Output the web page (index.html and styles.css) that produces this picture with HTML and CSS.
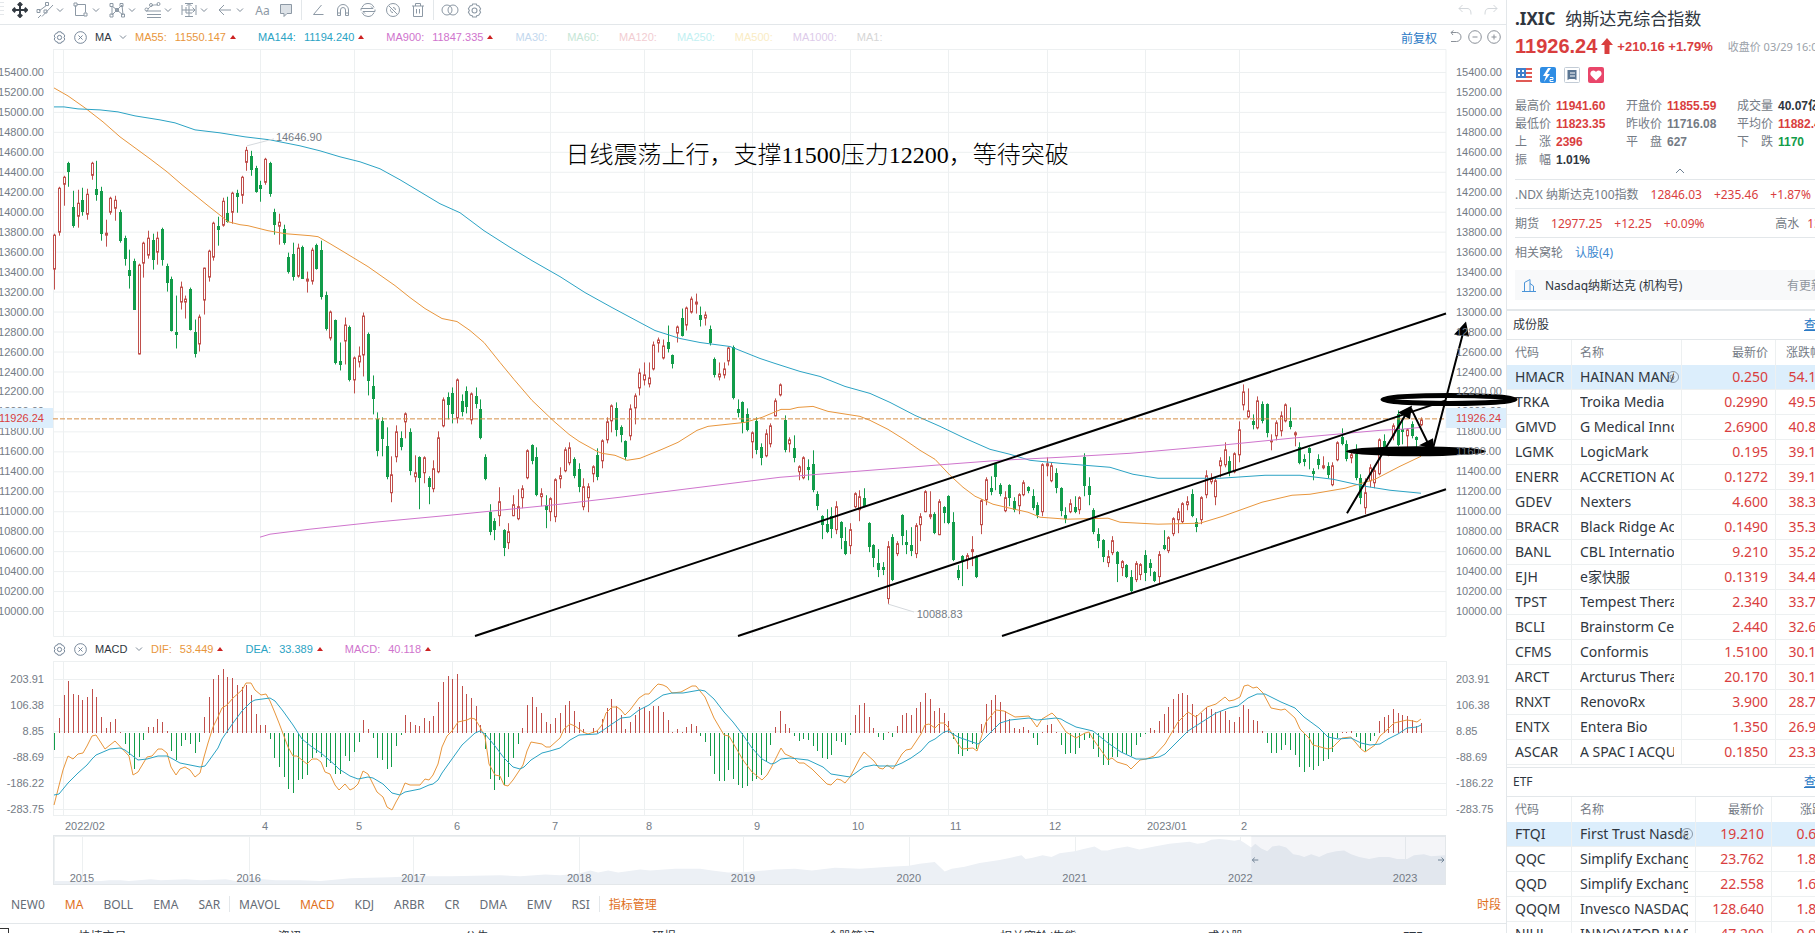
FILE: index.html
```
<!DOCTYPE html>
<html lang="zh-CN">
<head>
    <meta charset="UTF-8">
    <meta name="viewport" content="width=device-width, initial-scale=1.0">
    <title>.IXIC 纳斯达克综合指数</title>
    <link rel="stylesheet" href="styles.css">
</head>
<body>
    <svg class="defs" width="0" height="0" aria-hidden="true">
        <symbol id="caret" viewBox="0 0 8 8"><path d="M1 2.5l3 3 3-3"/></symbol>
        <symbol id="gear" viewBox="0 0 14 14"><path d="M5.3.9h3.4l.6 1.4 1.6.2 1.8 2.8-.9 1.7.9 1.7-1.8 2.8-1.6.2-.6 1.4H5.300l-.6-1.400-1.600-.2L1.300 8.700 2.200 7l-.9-1.700 1.800-2.800 1.600-.2z"/><circle cx="7" cy="7" r="2.300"/></symbol>
        <symbol id="close" viewBox="0 0 14 14"><circle cx="7" cy="7" r="6.300"/><path d="M4.800 4.800l4.400 4.400M9.200 4.800L4.800 9.200"/></symbol>
    </svg>

    <div class="app">
        <main class="chart">
            <div class="toolbar">
                <span class="handle"></span>
                <button class="move" aria-label="移动"><svg viewBox="0 0 16 16"><path d="M8 1v14M1 8h14M5.800 3.200L8 1l2.200 2.200M5.800 12.800L8 15l2.200-2.200M3.200 5.800L1 8l2.200 2.200M12.800 5.800L15 8l-2.200 2.200"/></svg></button>
                <button class="tool" aria-label="通道"><svg viewBox="0 0 18 18"><path d="M3 10l8-6M6 15.500L17 4M2 17l3-3M1 8.500h3v3H1zM9.500 1.500h3v3h-3zM8 9h3v3H8z"/></svg><svg class="caret"><use href="#caret"/></svg></button>
                <button class="tool" aria-label="矩形"><svg viewBox="0 0 18 18"><path d="M3.500 4.500v10H12M5 3.500h8.500v8M2 2h3v3H2zM12 12h3v3h-3z"/></svg><svg class="caret"><use href="#caret"/></svg></button>
                <button class="tool" aria-label="形态"><svg viewBox="0 0 18 18"><path d="M4 14V5l5 4 5-5 1 10-6-5-5 5M2 2.500h3v3H2zM12 2.500h3v3h-3zM2 13h3v3H2zM13.500 13h3v3h-3zM7.500 7.500h3v3h-3z"/></svg><svg class="caret"><use href="#caret"/></svg></button>
                <button class="tool" aria-label="黄金分割"><svg viewBox="0 0 18 18"><path d="M2 10h15M3 13.500h14M3 16.500h14M4 8c4-5 7-4 10-4"/><circle cx="2.500" cy="8.500" r="1.500"/><circle cx="7" cy="4" r="1.500"/><circle cx="14.500" cy="3" r="1.500"/></svg><svg class="caret"><use href="#caret"/></svg></button>
                <button class="tool" aria-label="测量"><svg viewBox="0 0 18 18"><path d="M2 4v10M16 4v10M2 9h13M9 2v14M5 2.500h8M5 15.500h8M12.500 6.500L15 9l-2.500 2.500M6.500 5L9 2.500 11.500 5M6 6v6h6"/></svg><svg class="caret"><use href="#caret"/></svg></button>
                <button class="tool" aria-label="箭头"><svg viewBox="0 0 18 18"><path d="M15 9H3M8 4L3 9l5 5"/></svg><svg class="caret"><use href="#caret"/></svg></button>
                <button class="text-tool">Aa</button>
                <button class="icon" aria-label="批注"><svg viewBox="0 0 16 16"><path class="soft" d="M2.500 2.500h11v9H9l-3 3v-3H2.500z"/></svg></button>
                <span class="split"></span>
                <button class="icon" aria-label="角度"><svg viewBox="0 0 16 16"><path d="M11.500 3L3.500 12.500h10"/></svg></button>
                <button class="icon" aria-label="磁吸"><svg viewBox="0 0 16 16"><path d="M2.500 13.500V8a5.500 5.500 0 0 1 11 0v5.500h-3V8a2.500 2.500 0 0 0-5 0v5.500zM2.500 11h3M10.500 11h3"/></svg></button>
                <button class="icon" aria-label="连续绘制"><svg viewBox="0 0 16 16"><path d="M2 5.500a6.500 6.500 0 0 1 12 0M14 10.500a6.500 6.500 0 0 1-12 0M1 8.500V6.500h12l-2-2M15 7.500v2H3l2 2"/></svg></button>
                <button class="icon" aria-label="隐藏"><svg viewBox="0 0 16 16"><circle cx="8" cy="8" r="6.500"/><path d="M4 4l8.500 8.500M8 5.500a2.500 2.500 0 0 1 2.500 2.500M5.500 7.500A2.500 2.500 0 0 0 8 10.500"/></svg></button>
                <button class="icon" aria-label="删除"><svg viewBox="0 0 16 16"><path d="M2 4h12M5.500 4V1.500h5V4M3.500 4v10.500h9V4M6.500 7v4.500M9.500 7v4.500"/></svg></button>
                <span class="split"></span>
                <button class="icon" aria-label="对比"><svg class="wide" viewBox="0 0 18 16"><circle cx="6" cy="8" r="5"/><circle cx="12" cy="8" r="5"/></svg></button>
                <button class="icon" aria-label="设置"><svg class="cog"><use href="#gear"/></svg></button>
                <div class="history">
                    <button aria-label="撤销"><svg viewBox="0 0 14 12"><path d="M4.500 1L1 4.500 4.500 8M1 4.500h8c3 0 4 2 4 6"/></svg></button>
                    <button aria-label="重做"><svg viewBox="0 0 14 12"><path d="M9.500 1L13 4.500 9.500 8M13 4.500H5c-3 0-4 2-4 6"/></svg></button>
                </div>
            </div>

            <div class="legend">
                <svg class="ico"><use href="#gear"/></svg>
                <svg class="ico"><use href="#close"/></svg>
                <label class="pick"><select aria-label="主图指标"><option>MA</option></select><svg class="caret"><use href="#caret"/></svg></label>
                <div class="values">
                    <span class="ma55"><b>MA55:</b><b>11550.147</b><i class="up"></i></span>
                    <span class="ma144"><b>MA144:</b><b>11194.240</b><i class="up"></i></span>
                    <span class="ma900"><b>MA900:</b><b>11847.335</b><i class="up"></i></span>
                    <span class="ma30">MA30:</span>
                    <span class="ma60">MA60:</span>
                    <span class="ma120">MA120:</span>
                    <span class="ma250">MA250:</span>
                    <span class="ma500">MA500:</span>
                    <span class="ma1000">MA1000:</span>
                    <span class="ma1">MA1:</span>
                </div>
                <div class="scale">
                    <a href="#">前复权</a>
                    <svg viewBox="0 0 14 14"><path d="M2 2.500h5.500a4.500 4.500 0 0 1 0 9H2M4.500.5L2 2.500l2 2.500"/></svg>
                    <svg viewBox="0 0 14 14"><circle cx="7" cy="7" r="6.300"/><path d="M4.500 7h5"/></svg>
                    <svg viewBox="0 0 14 14"><circle cx="7" cy="7" r="6.300"/><path d="M4.500 7h5M7 4.500v5"/></svg>
                </div>
            </div>

            <div class="pane price">
                <div class="axis left" data-axis="price"></div>
                <div class="plot">
                    <svg id="price" viewBox="53 48 1393 589" preserveAspectRatio="none">
                        <g class="grid"></g>
                        <g class="candles"></g>
                        <polyline class="line ma55" points="54,87 68,95 85,107 103,121 120,136 150,158 167,171 182,184 192,192 208,205 222,216 228,221 240,224 248,225 268,230 285,233 310,235 318,236 330,243 345,252 368,266 395,285 410,297 425,308 442,318 457,321 470,330 484,342 500,362 514,379 532,400 554,421 569,434 579,441 597,451 602,453 615,455 627,460 640,458 662,449 678,442 697,430 708,426 745,422 762,417 781,409 790,409 798,407 813,406 828,411 860,416 870,420 888,429 904,439 920,450 935,459 950,475 963,487 975,496 993,504 1010,508 1028,512 1040,517 1067,519 1108,518 1120,522 1158,524 1200,523 1223,516 1262,502 1292,495 1310,494 1345,488 1375,479 1400,466 1421,456"/>
                        <polyline class="line ma144" points="54,106 64,106 78,108 100,109 118,111 135,115 160,119 175,122 195,129 220,132 245,136 270,139 300,145 320,150 340,156 360,161 380,168 400,179 420,191 440,203 460,212 484,230 509,246 532,260 560,276 585,292 612,307 640,322 655,330 680,338 700,342 730,346 745,352 760,358 775,363 800,371 820,376 845,386 870,393 890,402 915,415 940,426 965,438 990,449 1010,454 1030,460 1060,463 1110,467 1133,474 1158,478 1220,478 1265,475 1300,475 1333,479 1365,486 1390,490 1421,493"/>
                        <polyline class="line ma900" points="260,537 270,534 310,529 375,522 450,515 500,510 560,504 620,497 700,487 780,477 870,470 960,463 1000,460 1060,457 1130,453 1220,445 1290,438 1380,430 1400,429 1421,427"/>
                        <path class="last" d="M53 418.500H1446"/>
                        <path class="leader" d="M247 145L274 138M888 604L914 612"/>
                        <path class="trend" d="M475 636L1446 313M738 636L1446 400M1002 636L1446 489"/>
                        <path class="arrow" d="M1347 513L1408 410M1411 408L1430 447M1433 448L1465 325"/>
                        <path class="head" d="M1412 405L1398 412 1410 419zM1434 449L1419 445 1433 438zM1466 321L1454 334 1469 336z"/>
                        <ellipse class="ring" cx="1449" cy="399" rx="66" ry="4"/>
                        <ellipse class="blot" cx="1416" cy="451" rx="70" ry="5"/>
                    </svg>
                    <span class="mark high">14646.90</span>
                    <span class="mark low">10088.83</span>
                    <p class="note">日线震荡上行，支撑11500压力12200，等待突破</p>
                </div>
                <div class="axis right" data-axis="price"></div>
            </div>

            <div class="legend">
                <svg class="ico"><use href="#gear"/></svg>
                <svg class="ico"><use href="#close"/></svg>
                <label class="pick"><select aria-label="副图指标"><option>MACD</option></select><svg class="caret"><use href="#caret"/></svg></label>
                <div class="values">
                    <span class="ma55"><b>DIF:</b><b>53.449</b><i class="up"></i></span>
                    <span class="ma144"><b>DEA:</b><b>33.389</b><i class="up"></i></span>
                    <span class="ma900"><b>MACD:</b><b>40.118</b><i class="up"></i></span>
                </div>
            </div>

            <div class="pane macd">
                <div class="axis left" data-axis="macd"></div>
                <div class="plot">
                    <svg id="macd" viewBox="53 661 1393 155" preserveAspectRatio="none">
                        <g class="grid"></g>
                        <g class="bars"></g>
                        <polyline class="line ma55" points="54,805 63,770 68,756 73,759 78,754 83,753 87,746 92,736 96,735 105,749 115,741 129,756 133,775 138,772 147,757 152,756 158,749 162,749 167,753 171,767 176,775 180,769 185,767 190,770 195,777 200,773 204,757 208,743 213,727 218,717 222,708 227,705 233,698 242,690 246,683 251,683 255,690 261,695 266,694 270,701 275,713 279,723 288,747 293,756 297,756 307,764 312,759 317,759 321,762 325,772 330,774 335,785 339,790 345,784 350,790 354,788 358,784 363,771 368,774 377,792 383,797 387,807 392,810 396,802 400,795 405,783 410,785 420,785 425,779 429,780 433,775 438,764 442,747 447,736 452,731 458,722 467,720 471,718 475,719 480,727 485,737 489,764 495,775 500,776 504,785 508,786 513,780 523,765 527,751 531,742 542,744 546,747 550,747 560,738 564,729 570,724 575,726 583,732 588,734 597,731 602,725 606,713 612,707 617,707 621,710 625,715 630,710 639,698 645,694 649,694 654,688 658,684 663,685 667,687 672,693 681,692 692,686 696,686 700,691 705,697 714,718 724,735 729,736 743,760 752,772 762,780 767,775 771,768 781,748 785,754 794,758 799,763 804,763 812,769 827,784 831,785 837,779 841,780 845,783 850,777 860,758 864,752 874,761 879,768 883,769 887,765 893,769 902,754 906,750 911,749 921,734 925,725 929,724 935,728 940,723 944,723 948,727 958,744 962,749 973,748 977,751 981,738 986,722 996,710 1004,711 1015,717 1029,716 1037,727 1042,719 1052,713 1056,717 1066,732 1076,738 1085,733 1089,732 1093,739 1108,760 1112,758 1117,762 1127,765 1131,769 1140,760 1146,759 1154,756 1165,744 1178,722 1188,712 1196,717 1207,707 1216,704 1225,697 1229,701 1234,700 1240,697 1244,686 1248,685 1253,688 1257,687 1263,693 1271,708 1281,710 1285,709 1295,718 1300,729 1309,738 1313,745 1328,749 1332,748 1342,738 1351,737 1361,749 1365,752 1375,745 1380,736 1388,729 1394,723 1407,720 1413,721 1417,722 1421,719"/>
                        <polyline class="line ma144" points="54,795 59,794 68,783 78,773 87,765 92,759 96,755 110,749 120,748 125,750 138,760 147,759 158,756 167,756 171,758 180,763 190,765 200,767 205,766 208,762 218,748 222,739 233,723 242,711 251,702 255,700 270,698 275,701 283,711 293,725 302,739 312,747 321,753 335,765 339,769 350,776 358,779 368,777 373,778 383,784 392,793 400,795 405,792 420,789 429,785 433,784 438,780 442,773 452,759 462,745 475,733 480,731 485,734 495,746 504,758 513,767 520,769 524,767 531,760 542,753 550,751 560,748 570,740 579,735 597,734 602,731 612,724 621,718 630,717 639,710 649,705 654,701 663,695 672,693 683,693 700,690 705,691 714,699 724,712 733,722 743,735 752,748 762,759 771,764 775,763 781,759 790,758 808,760 823,767 831,774 850,777 864,767 874,765 879,766 895,766 902,763 911,758 921,751 929,742 935,739 944,732 948,731 958,737 978,744 981,742 991,732 1000,723 1010,720 1029,718 1037,720 1056,718 1061,719 1066,722 1076,727 1093,731 1108,743 1121,752 1136,759 1146,759 1159,757 1165,754 1178,741 1188,731 1202,722 1216,713 1229,708 1238,706 1248,698 1257,694 1265,694 1271,697 1281,702 1295,708 1304,717 1319,728 1328,737 1338,739 1351,738 1361,743 1370,745 1380,744 1388,739 1398,734 1407,728 1417,727 1421,725"/>
                    </svg>
                </div>
                <div class="axis right" data-axis="macd"></div>
            </div>

            <div class="months" id="months"></div>

            <div class="navigator" id="years">
                <svg id="nav" viewBox="53 835 1393 50" preserveAspectRatio="none">
                    <g class="grid"></g>
                    <polygon class="area" points="53,885 53,882 100,882 108,881 120,881 128,882 150,880 160,881 185,880 200,881 225,880 235,882 250,879 275,881 300,881 320,882 350,879 390,878 413,877 450,877 500,876 520,877 545,875 560,876 579,874 590,871 598,873 608,871 618,873 640,870 650,871 675,869 700,869 712,871 728,873 740,873 752,872 775,870 795,869 812,871 835,868 860,869 875,868 890,867 909,866 920,864 935,862 940,867 945,872 952,869 965,867 980,863 1000,860 1010,858 1022,855 1026,859 1032,858 1043,855 1052,857 1060,853 1075,851 1082,849 1095,846 1102,850 1108,850 1116,848 1128,846 1140,849 1155,846 1170,843 1190,841 1198,843 1205,842 1212,839 1220,838 1228,839 1235,840 1240,839 1245,842 1252,847 1256,843 1262,848 1268,851 1273,846 1280,845 1287,847 1294,854 1300,855 1305,857 1312,854 1320,857 1328,853 1337,851 1345,850 1352,854 1360,857 1370,859 1380,857 1390,857 1398,859 1408,859 1415,855 1425,854 1432,856 1446,855 1446,885"/>
                    <rect class="window" x="1252" y="835" width="194" height="50"/>
                    <path class="grip" d="M1259 860h-6M1255.500 857.500L1253 860l2.500 2.500M1439 860h6M1442.500 857.500L1445 860l-2.500 2.500"/>
                </svg>
            </div>

            <nav class="indicators">
                <a href="#">NEW0</a><a href="#" class="on">MA</a><a href="#">BOLL</a><a href="#">EMA</a><a href="#">SAR</a>
                <span class="split"></span>
                <a href="#">MAVOL</a><a href="#" class="on">MACD</a><a href="#">KDJ</a><a href="#">ARBR</a><a href="#">CR</a><a href="#">DMA</a><a href="#">EMV</a><a href="#">RSI</a>
                <span class="split"></span>
                <a href="#" class="on">指标管理</a>
                <a href="#" class="on period">时段</a>
            </nav>

            <nav class="tabs">
                <i class="box"></i>
                <a href="#">快捷交易</a><a href="#">资讯</a><a href="#">公告</a><a href="#">研报</a><a href="#">个股笔记</a><a href="#">相关窝轮/牛熊</a><a href="#">成分股</a><a href="#">ETF</a>
            </nav>
        </main>

        <aside class="quote">
            <div class="inner">
                <h1><b>.IXIC</b>纳斯达克综合指数</h1>
                <div class="last-price">
                    <strong>11926.24</strong>
                    <svg viewBox="0 0 12 16"><path d="M6 0l6 7H8.500v9h-5V7H0z"/></svg>
                    <b>+210.16 +1.79%</b>
                    <span>收盘价 03/29 16:00</span>
                </div>
                <div class="badges">
                    <svg viewBox="0 0 16 16"><path fill="#e05a55" d="M0 1h16v2H0zM0 5h16v2H0zM0 9h16v2H0zM0 13h16v2H0z"/><path fill="#3f7fcb" d="M0 1h10v10H0z"/><path fill="#fff" d="M2 3h2v2H2zM6 3h2v2H6zM2 7h2v2H2zM6 7h2v2H6z"/></svg>
                    <svg viewBox="0 0 16 16"><rect width="16" height="16" rx="2" fill="#2f8de4"/><path fill="#fff" d="M8 1L3 9h3l-2 6 6-8H7l4-6z"/><path fill="none" stroke="#fff" d="M10 10.500h3v2h-3v2h3.500"/></svg>
                    <svg viewBox="0 0 16 16"><rect x=".5" y=".5" width="15" height="15" rx="1" fill="#fff" stroke="#c3ccd6"/><path fill="#5b7693" d="M3.500 3h9v10l-2-1h-5l-2 1z"/><path stroke="#fff" d="M6 6h5M6 9h5"/></svg>
                    <svg viewBox="0 0 16 16"><rect width="16" height="16" rx="2" fill="#e9466a"/><path fill="#fff" d="M8 13.500L3 8.500C1.500 6.500 3 3.500 5.300 3.500 6.800 3.500 7.500 4.300 8 5c.5-.7 1.200-1.500 2.700-1.500C13 3.500 14.500 6.500 13 8.500z"/></svg>
                </div>
                <dl class="stats">
                    <div><dt>最高价</dt><dd class="rise">11941.60</dd></div>
                    <div><dt>开盘价</dt><dd class="rise">11855.59</dd></div>
                    <div><dt>成交量</dt><dd class="dark">40.07亿</dd></div>
                    <div><dt>最低价</dt><dd class="rise">11823.35</dd></div>
                    <div><dt>昨收价</dt><dd>11716.08</dd></div>
                    <div><dt>平均价</dt><dd class="rise">11882.47</dd></div>
                    <div><dt><i>上</i><i>涨</i></dt><dd class="rise">2396</dd></div>
                    <div><dt><i>平</i><i>盘</i></dt><dd>627</dd></div>
                    <div><dt><i>下</i><i>跌</i></dt><dd class="fall">1170</dd></div>
                    <div><dt><i>振</i><i>幅</i></dt><dd class="dark">1.01%</dd></div>
                </dl>
                <button class="fold" aria-label="收起"><svg viewBox="0 0 10 6"><path d="M1 5l4-4 4 4"/></svg></button>
                <div class="row"><span>.NDX 纳斯达克100指数</span><em>12846.03</em><em>+235.46</em><em>+1.87%</em></div>
                <div class="row"><span>期货</span><em>12977.25</em><em>+12.25</em><em>+0.09%</em><span class="basis">高水 <em>13.50</em></span></div>
                <div class="row"><span>相关窝轮</span><a href="#">认股(4)</a></div>
                <div class="org">
                    <svg viewBox="0 0 14 14"><path d="M0 13.500h14M2.500 13V4.500L8 1.500V13M8 5.500l3.500 2.500v5"/></svg>
                    <span>Nasdaq纳斯达克 (机构号)</span>
                    <small>有更新</small>
                </div>

                <section>
                    <h2>成份股<a href="#">查看</a></h2>
                    <table class="stocks">
                        <thead><tr><th>代码</th><th>名称</th><th>最新价</th><th>涨跌幅</th></tr></thead>
                        <tbody>
                            <tr class="active"><td>HMACR</td><td><span>HAINAN MANASLU</span><svg class="play" viewBox="0 0 12 12"><circle cx="6" cy="6" r="5.500"/><circle cx="5" cy="6" r="2"/></svg></td><td>0.250</td><td>54.13%</td></tr>
                            <tr><td>TRKA</td><td><span>Troika Media</span></td><td>0.2990</td><td>49.50%</td></tr>
                            <tr><td>GMVD</td><td><span>G Medical Innovations</span></td><td>2.6900</td><td>40.84%</td></tr>
                            <tr><td>LGMK</td><td><span>LogicMark</span></td><td>0.195</td><td>39.19%</td></tr>
                            <tr><td>ENERR</td><td><span>ACCRETION ACQUISITION</span></td><td>0.1272</td><td>39.17%</td></tr>
                            <tr><td>GDEV</td><td><span>Nexters</span></td><td>4.600</td><td>38.35%</td></tr>
                            <tr><td>BRACR</td><td><span>Black Ridge Acquisition</span></td><td>0.1490</td><td>35.33%</td></tr>
                            <tr><td>BANL</td><td><span>CBL International</span></td><td>9.210</td><td>35.24%</td></tr>
                            <tr><td>EJH</td><td><span>e家快服</span></td><td>0.1319</td><td>34.46%</td></tr>
                            <tr><td>TPST</td><td><span>Tempest Therapeutics</span></td><td>2.340</td><td>33.71%</td></tr>
                            <tr><td>BCLI</td><td><span>Brainstorm Cell Therap</span></td><td>2.440</td><td>32.61%</td></tr>
                            <tr><td>CFMS</td><td><span>Conformis</span></td><td>1.5100</td><td>30.17%</td></tr>
                            <tr><td>ARCT</td><td><span>Arcturus Therapeutics</span></td><td>20.170</td><td>30.13%</td></tr>
                            <tr><td>RNXT</td><td><span>RenovoRx</span></td><td>3.900</td><td>28.71%</td></tr>
                            <tr><td>ENTX</td><td><span>Entera Bio</span></td><td>1.350</td><td>26.94%</td></tr>
                            <tr><td>ASCAR</td><td><span>A SPAC I ACQUISITION</span></td><td>0.1850</td><td>23.33%</td></tr>
                        </tbody>
                    </table>
                </section>

                <section>
                    <h2>ETF<a href="#">查看</a></h2>
                    <table class="etf">
                        <thead><tr><th>代码</th><th>名称</th><th>最新价</th><th>涨跌幅</th></tr></thead>
                        <tbody>
                            <tr class="active"><td>FTQI</td><td><span>First Trust Nasdaq BuyWrite</span><svg class="play" viewBox="0 0 12 12"><circle cx="6" cy="6" r="5.500"/><circle cx="5" cy="6" r="2"/></svg></td><td>19.210</td><td>0.68%</td></tr>
                            <tr><td>QQC</td><td><span>Simplify Exchange Traded</span></td><td>23.762</td><td>1.85%</td></tr>
                            <tr><td>QQD</td><td><span>Simplify Exchange Traded</span></td><td>22.558</td><td>1.62%</td></tr>
                            <tr><td>QQQM</td><td><span>Invesco NASDAQ 100</span></td><td>128.640</td><td>1.84%</td></tr>
                            <tr><td>NJUL</td><td><span>INNOVATOR NASDAQ</span></td><td>47.200</td><td>0.92%</td></tr>
                        </tbody>
                    </table>
                </section>
            </div>
        </aside>
    </div>
    <script src="chart.js"></script>
</body>
</html>
```
FILE: styles.css
```
:root {
    --red: #d93e3e;
    --green: #129c4a;
    --orange: #e8963c;
    --cyan: #2ba3c4;
    --pink: #cf74cd;
    --accent: #e0701c;
    --link: #2b7ac5;
    --text: #2f3640;
    --muted: #747b85;
    --line: #e3e7ea;
    --grid: #edf0f1;
    --hover: #dceefc;
    --candle: #c04f4b;
}

* {
    box-sizing: border-box;
}

body {
    margin: 0;
    height: 100vh;
    overflow: hidden;
    background: #fff;
    color: var(--text);
    font-family: "Noto Sans", "Noto Sans CJK SC", sans-serif;
    font-size: 12px;
}

a {
    color: inherit;
    text-decoration: none;
}

button {
    display: flex;
    align-items: center;
    justify-content: center;
    padding: 0;
    border: 0;
    background: none;
    cursor: pointer;
}

svg {
    display: block;
    fill: none;
}

.defs {
    position: absolute;
}

.app {
    display: flex;
    height: 100vh;
}

.chart {
    position: relative;
    z-index: 1;
    flex: 1;
    min-width: 0;
    display: flex;
    flex-direction: column;
}

/* toolbar */
.toolbar {
    display: flex;
    align-items: center;
    flex: 0 0 24px;
    padding-bottom: 4px;
    border-bottom: 1px solid var(--line);
}

.toolbar svg {
    width: 16px;
    height: 16px;
    stroke: #8d99a5;
}

.handle {
    width: 4px;
    height: 16px;
    background: repeating-linear-gradient(#e4e7ea 0 1px, #fff 1px 4px);
}

.toolbar .move {
    width: 32px;
}

.toolbar .move svg {
    stroke: #333a42;
    stroke-width: 2;
}

.tool {
    width: 36px;
    gap: 2px;
    justify-content: flex-start;
}

.toolbar .tool svg {
    width: 18px;
    height: 18px;
}

.toolbar .tool .caret,
.caret {
    width: 8px;
    height: 8px;
    stroke: #7f8b98;
}

.text-tool {
    width: 21px;
    color: #8d99a5;
    font-family: "Noto Sans", sans-serif;
    font-size: 12px;
}

.icon {
    width: 25px;
}

.icon .wide {
    width: 18px;
}

.toolbar .icon .cog {
    width: 15px;
    height: 15px;
}

.soft {
    fill: #dde2e7;
}

.split {
    width: 1px;
    height: 20px;
    margin: 0 3px;
    background: var(--line);
}

.history {
    display: flex;
    gap: 12px;
    margin-left: auto;
    padding-right: 8px;
}

.toolbar .history svg {
    width: 14px;
    height: 12px;
    stroke: #d3d7db;
}

/* indicator legends */
.legend {
    display: flex;
    align-items: center;
    flex: 0 0 24px;
    padding-left: 53px;
    font-family: "Liberation Sans", sans-serif;
    font-size: 11px;
}

.legend .ico {
    width: 13px;
    height: 13px;
    margin-right: 8px;
    stroke: #6e8093;
}

.pick {
    display: flex;
    align-items: center;
    gap: 7px;
}

.pick select {
    appearance: none;
    padding: 0;
    border: 0;
    background: none;
    color: var(--text);
    font: inherit;
}

.values {
    display: flex;
    gap: 20px;
    margin-left: 8px;
}

.values span {
    display: flex;
    align-items: center;
    gap: 8px;
}

.values b {
    font-weight: 400;
}

.values .up {
    margin: 0 2px 0 -4px;
    border: 3px solid transparent;
    border-top: 0;
    border-bottom: 4px solid #cc2222;
}

.values .ma55 { color: var(--orange); }
.values .ma144 { color: var(--cyan); }
.values .ma900 { color: var(--pink); }
.values .ma30 { color: #c3d8ee; }
.values .ma60 { color: #c6e6d6; }
.values .ma120 { color: #f2cdd2; }
.values .ma250 { color: #c2f0f2; }
.values .ma500 { color: #faecc4; }
.values .ma1000 { color: #ddcbea; }
.values .ma1 { color: #d6d6d6; }

.scale {
    display: flex;
    align-items: center;
    gap: 5px;
    margin-left: auto;
    padding-right: 5px;
}

.scale a {
    margin-right: 7px;
    color: var(--link);
    font-size: 12px;
}

.scale svg {
    width: 14px;
    height: 14px;
    stroke: #8b9199;
}

/* chart panes */
.pane {
    display: grid;
    grid-template-columns: 53px minmax(0, 1fr) 60px;
}

.price {
    flex: 1;
    min-height: 0;
}

.macd {
    flex: 0 0 155px;
}

.plot {
    position: relative;
    min-height: 0;
}

.plot svg {
    position: absolute;
    width: 100%;
    height: 100%;
    overflow: visible;
}

.axis {
    position: relative;
    display: flex;
    flex-direction: column;
    color: var(--muted);
    font-family: "Liberation Sans", sans-serif;
    font-size: 11px;
}

.price .axis {
    padding: 13px 0 16px;
}

.macd .axis {
    margin-bottom: -6px;
    padding-top: 5px;
}

.axis span {
    flex: 1;
    display: flex;
    align-items: center;
}

.axis.left span {
    justify-content: flex-end;
    padding-right: 9px;
}

.axis.right span {
    padding-left: 10px;
}

.axis .tag {
    position: absolute;
    top: 61%;
    left: 0;
    right: 0;
    height: 20px;
    background: var(--hover);
    color: var(--red);
}

.grid path {
    stroke: var(--grid);
    shape-rendering: crispEdges;
}

.line {
    stroke-width: 1;
}

.line.ma55 { stroke: var(--orange); }
.line.ma144 { stroke: var(--cyan); }
.line.ma900 { stroke: var(--pink); }

.last {
    stroke: #d58f45;
    stroke-dasharray: 5 2;
}

.leader {
    stroke: #d5d9dd;
}

.trend,
.arrow {
    stroke: #000;
    stroke-width: 2;
}

.head,
.blot {
    fill: #000;
}

.ring {
    stroke: #000;
    stroke-width: 5;
}

.wick-up,
.bar-up {
    stroke: var(--candle);
    shape-rendering: crispEdges;
}

.wick-down,
.bar-down {
    stroke: var(--green);
    shape-rendering: crispEdges;
}

.body-up {
    fill: #fff;
    stroke: var(--candle);
    shape-rendering: crispEdges;
}

.body-down {
    fill: var(--green);
    shape-rendering: crispEdges;
}

.mark {
    position: absolute;
    color: var(--muted);
    font-family: "Liberation Sans", sans-serif;
    font-size: 11px;
    line-height: 12px;
}

.mark.high {
    left: 16%;
    top: 14%;
}

.mark.low {
    left: 62%;
    top: 95%;
}

.note {
    position: absolute;
    left: 36.8%;
    top: 15%;
    margin: 0;
    color: #000;
    font-family: "Liberation Serif", "Noto Sans CJK SC", serif;
    font-size: 24px;
    font-weight: 300;
    line-height: 36px;
    white-space: nowrap;
}

.months,
.navigator {
    position: relative;
    margin: 0 60px 0 53px;
    color: var(--muted);
    font-family: "Liberation Sans", sans-serif;
    font-size: 11px;
}

.months {
    flex: 0 0 19px;
}

.months span {
    position: absolute;
    padding-left: 2px;
    line-height: 20px;
}

.navigator {
    flex: 0 0 50px;
    min-height: 0;
    border: 1px solid var(--line);
}

.navigator svg {
    width: 100%;
    height: 100%;
}

.navigator span {
    position: absolute;
    bottom: 0;
    line-height: 12px;
    transform: translateX(-50%);
}

.area {
    fill: #ecf0f5;
}

.window {
    fill: rgba(110, 130, 160, 0.08);
}

.grip {
    stroke: #6e8093;
}

/* bottom bars */
.indicators {
    display: flex;
    align-items: center;
    flex: 0 0 39px;
    gap: 20px;
    padding: 0 5px 0 11px;
    border-bottom: 1px solid var(--line);
    color: #656c76;
}

.indicators .split {
    height: 16px;
    margin: 0 -11px;
}

.on {
    color: var(--accent);
}

.period {
    margin-left: auto;
}

.tabs {
    display: flex;
    flex: 0 0 9px;
    overflow: hidden;
    padding-top: 4px;
    line-height: 18px;
}

.tabs .box {
    width: 9px;
    height: 12px;
    border: solid #333;
    border-width: 1px 1px 0 0;
}

.tabs a {
    flex: 1;
    text-align: center;
}

/* quote panel */
.quote {
    flex: 0 0 309px;
    overflow: hidden;
    border-left: 1px solid var(--line);
}

.inner {
    width: 345px;
}

h1 {
    display: flex;
    gap: 10px;
    margin: 0;
    padding: 7px 8px 0;
    font-size: 17px;
    font-weight: 400;
    line-height: 24px;
}

.last-price {
    display: flex;
    align-items: center;
    height: 30px;
    padding-left: 8px;
    color: var(--red);
    font-family: "Liberation Sans", sans-serif;
    white-space: nowrap;
}

.last-price strong {
    font-size: 20px;
}

.last-price svg {
    width: 12px;
    height: 16px;
    margin: 0 4px;
    fill: var(--red);
}

.last-price b {
    font-size: 13px;
}

.last-price span {
    margin-left: 15px;
    color: #9aa1a9;
    font-family: "Noto Sans", "Noto Sans CJK SC", sans-serif;
    font-size: 11px;
}

.badges {
    display: flex;
    gap: 8px;
    padding: 6px 9px 14px;
}

.badges svg {
    width: 16px;
    height: 16px;
}

.stats {
    display: grid;
    grid-template-columns: repeat(3, 111px);
    margin: 0;
    padding-left: 8px;
    line-height: 18px;
}

.stats div {
    display: flex;
    gap: 5px;
}

dt {
    display: flex;
    justify-content: space-between;
    width: 36px;
    color: var(--muted);
}

dt i {
    font-style: normal;
}

dd {
    margin: 0;
    color: var(--muted);
    font-family: "Liberation Sans", "Noto Sans CJK SC", sans-serif;
    font-weight: 700;
}

dd.rise { color: var(--red); }
dd.fall { color: var(--green); }
dd.dark { color: var(--text); }

.fold {
    width: 100%;
    height: 10px;
    padding-bottom: 6px;
}

.fold svg {
    width: 10px;
    height: 6px;
    stroke: #6e8093;
}

.row {
    display: flex;
    align-items: center;
    gap: 12px;
    height: 29px;
    margin-left: 8px;
    border-top: 1px solid var(--line);
    color: var(--muted);
    white-space: nowrap;
}

.row em {
    color: var(--red);
    font-style: normal;
}

.row a {
    color: #3d88d0;
}

.row .basis {
    margin-left: auto;
    padding-right: 14px;
}

.basis em {
    margin-left: 5px;
}

.org {
    display: flex;
    align-items: center;
    gap: 9px;
    height: 30px;
    margin: 4px 0 9px 8px;
    padding: 0 29px 0 7px;
    background: #f8f9fa;
}

.org svg {
    width: 14px;
    height: 14px;
    stroke: #4a94d8;
}

.org small {
    margin-left: auto;
    color: #8f969e;
    font-size: 12px;
}

section {
    border-top: 2px solid var(--line);
}

section + section {
    border-top-width: 1px;
    margin-top: 2px;
}

h2 {
    display: flex;
    justify-content: space-between;
    margin: 0;
    padding: 0 24px 0 6px;
    font-size: 12px;
    font-weight: 400;
    line-height: 28px;
}

h2 a {
    color: var(--link);
    text-decoration: underline;
}

table {
    width: 100%;
    border-collapse: separate;
    border-spacing: 0;
    table-layout: fixed;
    border-top: 1px solid var(--line);
}

th,
td {
    height: 25px;
    padding: 0 7px 0 8px;
    border-right: 1px solid var(--grid);
    border-bottom: 1px solid var(--grid);
    font-size: 14px;
    font-weight: 400;
    line-height: 24px;
    text-align: left;
    white-space: nowrap;
}

th {
    border-bottom: 0;
    color: var(--muted);
    font-size: 12px;
}

tr > :nth-child(1) { width: 65px; }
tr > :nth-child(2) { width: 110px; }
tr > :nth-child(3) { width: 94px; text-align: right; }
.etf tr > :nth-child(2) { width: 124px; }
.etf tr > :nth-child(3) { width: 76px; }

tr > :nth-child(4) {
    padding-right: 15px;
    text-align: right;
}

.stocks th:nth-child(4) {
    padding-right: 29px;
}

td:nth-child(2) {
    position: relative;
}

td span {
    display: block;
    overflow: hidden;
}

td:nth-child(n + 3) {
    color: var(--red);
}

.active td {
    background: var(--hover);
}

.play {
    position: absolute;
    top: 6px;
    right: 2px;
    width: 12px;
    height: 12px;
    stroke: #8b99a8;
}
```
FILE: chart.js
```
const LEFT = 53;
const RIGHT = 1446;
const WIDTH = RIGHT - LEFT;
const STEP = 4.681;
const ZERO = 733;

// direction (+ up, - down) then high, body top, body bottom, low
const candles = `
+233,234,268,288 +186,187,231,234 +175,176,183,204 -161,162,170,185 -190,206,224,226 +189,202,215,226 -187,199,210,214
+188,193,213,218 +161,162,174,178 -160,188,193,199 -186,190,232,239 +219,232,234,245 +196,197,211,213 +195,199,207,219
-209,211,239,241 -235,237,257,264 -249,269,274,287 -258,260,308,308 +263,264,353,353 +241,242,262,276 +230,237,254,257
-233,239,258,268 +231,237,251,263 -227,228,258,264 -263,265,281,290 -276,278,329,330 -295,331,333,347 +281,286,301,308
+295,298,301,317 -287,288,328,329 -319,331,353,356 +314,316,343,350 +267,267,299,313 +249,250,276,280 +221,222,256,259
-216,225,228,244 +197,200,224,225 -196,212,220,221 +191,192,211,222 -189,192,195,211 +175,176,194,202 +146,149,161,169
-150,155,168,174 -165,167,190,191 -180,184,187,200 +157,158,181,183 -161,162,192,195 -208,211,223,233 +213,221,225,243
-224,228,241,243 -252,256,270,272 -242,253,275,279 +243,247,275,276 -245,246,277,277 +271,278,280,291 +247,249,280,283
-243,244,267,268 -240,249,295,298 -291,294,327,329 +310,311,337,339 -319,319,362,363 -342,361,364,369 +317,324,340,363
-325,326,379,380 +356,357,379,392 +346,355,361,366 +312,315,354,375 -332,333,380,394 -375,386,398,413 -412,419,450,455
-417,421,438,455 -427,446,476,478 +456,474,492,501 +425,431,456,461 -431,438,446,449 +412,413,421,437 -428,432,470,474
+455,472,476,481 -456,457,477,508 +456,457,472,482 -476,478,486,503 +460,468,488,491 +431,437,471,472 +397,399,425,426
-392,397,404,418 -387,393,413,422 +378,379,417,422 -394,401,411,415 -386,391,406,412 +392,393,419,423 -387,396,403,407
-399,409,437,438 -454,457,478,479 -504,512,531,534 -518,521,529,539 +487,501,515,525 -529,530,547,555 +523,531,542,548
+495,504,515,515 +489,506,518,519 +485,488,497,507 +449,450,477,478 -444,445,460,463 -447,457,494,495 +488,493,496,505
-495,505,509,527 +497,498,511,520 +478,479,516,521 +467,475,478,487 +447,449,470,471 +442,447,462,464 -457,459,475,477
-463,469,486,491 +478,486,506,509 +483,486,497,511 +465,466,473,481 -448,455,476,479 +439,440,460,467 +417,421,439,442
+404,405,420,431 -402,408,429,435 -425,427,434,441 -440,441,456,459 +404,408,435,439 +393,395,407,423 +368,372,387,394
+362,374,379,384 +362,377,383,386 +341,344,368,369 +337,339,342,351 +339,345,357,358 -325,341,348,351 -354,355,363,367
+325,326,332,341 -308,317,334,335 +306,307,324,329 +296,298,311,312 +293,301,303,312 -306,314,318,325 +311,314,317,324
-325,328,341,344 -357,359,374,376 +362,373,376,379 +362,368,374,377 +346,347,360,364 -345,347,397,398 -399,409,412,416
-401,402,422,432 -408,414,429,430 +431,432,441,457 -417,421,449,453 -443,447,457,464 +429,433,455,456 +423,425,443,446
+398,400,415,415 +383,384,394,395 -415,420,449,451 +437,439,443,451 -435,448,457,461 +465,466,471,479 +456,457,477,478
-459,467,469,479 -450,464,489,491 -491,494,505,509 -515,516,524,538 -509,524,531,532 -507,516,528,537 +501,506,529,533
-521,522,537,548 -527,541,553,554 +523,529,545,553 +492,493,506,507 +490,496,509,520 -488,498,505,506 -522,523,546,551
-544,545,557,566 -549,563,569,576 -562,567,569,574 +541,546,598,603 -534,537,579,580 +541,543,553,555 -514,515,535,544
-530,542,544,553 -527,545,550,555 +523,525,553,557 +513,516,524,540 +490,491,511,511 +491,514,516,518 -512,514,532,533
+499,501,534,534 -506,507,512,522 -495,496,522,523 -512,522,559,560 -565,570,577,579 -555,556,561,585 +553,555,559,568
+536,549,551,565 -555,557,576,577 +499,500,524,533 +477,479,499,504 -476,488,491,494 -463,464,476,489 -483,485,493,495
+491,497,510,511 -484,485,497,505 -497,501,509,511 +493,494,505,513 +480,482,494,495 -486,487,490,492 -489,496,507,509
-502,505,514,517 +463,464,511,515 +457,463,465,475 +462,465,480,481 -468,473,487,492 -487,488,510,515 -507,515,518,522
+499,503,511,512 -496,507,511,512 +496,497,509,513 -453,457,485,495 -477,486,494,504 -508,510,531,533 -528,534,540,547
-539,540,556,561 +550,556,562,566 +536,540,552,554 -551,552,563,581 +560,561,567,575 -564,565,576,577 -570,577,590,591
+561,563,579,581 +563,564,574,579 -550,555,572,580 -559,563,567,575 -571,572,580,581 +551,554,576,583 -530,545,548,549
+536,537,550,552 +517,518,533,535 +508,511,519,532 +502,503,521,522 +496,501,504,509 -489,494,515,516 -518,522,526,531
+496,497,519,523 +470,475,494,497 +473,478,481,483 +477,480,496,504 +457,460,465,476 +442,449,464,466 -456,461,472,475
+452,453,471,472 +421,429,454,461 +384,391,404,409 +388,410,416,417 -414,421,424,428 +396,400,427,428 -401,404,420,422
-403,404,432,436 +434,440,441,449 +420,422,435,439 +411,415,430,435 +403,404,420,421 -407,421,426,428 +431,432,434,445
-442,447,462,463 -454,459,461,465 -447,448,452,468 -468,471,473,479 -454,459,464,468 +456,465,467,468 -462,466,474,477
+462,465,484,485 +441,442,459,460 -428,437,443,444 -440,444,458,460 +452,454,457,462 -444,454,477,479 -474,478,497,503
+478,492,507,513 +464,467,480,486 +468,470,482,487 +438,439,473,474 -434,441,450,453 +447,448,454,455 +423,425,435,439
-410,414,444,445 -418,429,431,443 +428,429,435,448 -421,424,435,437 -436,437,439,449 +417,419,424,425`.trim().split(/\s+/);

const histogram = [
    -17, 15, 38, 52, 39, 38, 33, 36, 44, 36, 16, 5, 11, 14, 1, -11, -22, -36, -24, -7, 6, 6, 14, 11, 2, -18, -27, -13, -7, -11,
    -20, -9, 16, 36, 54, 58, 64, 56, 55, 48, 46, 48, 38, 19, 8, 8, -6, -25, -34, -44, -56, -60, -47, -46, -42, -25, -20, -24, -34, -30,
    -41, -41, -23, -28, -19, -9, 13, 4, -5, -25, -27, -36, -34, -13, -2, 18, 11, 8, 7, 15, 12, 17, 31, 51, 57, 54, 59, 47, 39, 35,
    27, 8, -16, -46, -57, -47, -52, -44, -25, -11, 5, 28, 36, 26, 20, 11, 9, 15, 20, 28, 32, 22, 11, 4, 0, 5, 2, 14, 25, 34,
    27, 18, 4, 11, 18, 26, 26, 22, 27, 27, 21, 13, 1, 4, 1, 6, 9, 7, -3, -9, -23, -41, -48, -48, -37, -46, -52, -55, -53, -48,
    -46, -42, -28, -12, 6, 22, 9, 5, -3, -8, -6, -7, -13, -18, -25, -26, -22, -8, -9, -12, -2, 18, 28, 30, 16, 5, -4, -7, 1, -4,
    7, 18, 20, 18, 25, 31, 40, 34, 22, 25, 20, 12, -6, -21, -23, -18, -11, -16, 9, 29, 33, 38, 31, 22, 14, 5, 4, 6, 3, -5,
    -12, 1, 8, 9, 1, -12, -21, -20, -21, -15, -7, -5, -16, -24, -32, -32, -24, -24, -20, -21, -23, -12, -4, -1, 5, 3, 12, 19, 26, 34,
    39, 40, 38, 29, 18, 20, 26, 24, 21, 22, 22, 13, 11, 16, 28, 24, 13, 12, 2, -10, -20, -20, -17, -12, -17, -22, -34, -39, -34, -37,
    -33, -28, -26, -19, -5, 1, 1, 2, -4, -15, -18, -8, -3, 12, 16, 18, 24, 20, 18, 17, 13, 7, 10
];

const months = [
    ["2022/02", 63], ["4", 260], ["5", 354], ["6", 452], ["7", 550], ["8", 644],
    ["9", 752], ["10", 850], ["11", 948], ["12", 1047], ["2023/01", 1145], ["2", 1239]
];
const years = [
    ["2015", 81], ["2016", 248], ["2017", 413], ["2018", 579], ["2019", 743],
    ["2020", 909], ["2021", 1075], ["2022", 1241], ["2023", 1406]
];

const priceTicks = [];
for (let p = 15400; p >= 10000; p -= 200) priceTicks.push(p.toFixed(2));
const macdTicks = ["203.91", "106.38", "8.85", "-88.69", "-186.22", "-283.75"];

const percent = x => ((x - LEFT) / WIDTH * 100) + "%";
const line = d => `<path d="${d}"/>`;
const label = ([text, x]) => `<span style="left:${percent(x)}">${text}</span>`;
const at = i => Math.round(54.3 + i * STEP) + 0.5;

function drawGrid(id, top, bottom, rows, cols) {
    let out = line(`M${LEFT} ${top + 0.5}H${RIGHT}V${bottom - 0.5}H${LEFT + 0.5}V${top}`);
    rows.forEach(y => out += line(`M${LEFT} ${y + 0.5}H${RIGHT}`));
    cols.forEach(([, x]) => out += line(`M${x + 0.5} ${top}V${bottom}`));
    document.querySelector(`#${id} .grid`).innerHTML = out;
}

function drawCandles() {
    document.querySelector(".candles").innerHTML = candles.map((row, i) => {
        const dir = row[0] === "+" ? "up" : "down";
        const [high, top, bottom, low] = row.slice(1).split(",").map(Number);
        const x = at(i);
        const h = Math.max(1, bottom - top);
        const body = dir === "up"
            ? `<rect class="body-up" x="${x - 1}" y="${top + 0.5}" width="2" height="${h}"/>`
            : `<rect class="body-down" x="${x - 1.5}" y="${top}" width="3" height="${h + 1}"/>`;
        return `<path class="wick-${dir}" d="M${x} ${high}V${low + 1}"/>${body}`;
    }).join("");
}

function drawBars() {
    document.querySelector(".bars").innerHTML = histogram.map((v, i) =>
        `<path class="bar-${v > 0 ? "up" : "down"}" d="M${at(i)} ${ZERO}V${ZERO - v}"/>`
    ).join("");
}

function fillAxes() {
    document.querySelectorAll(".axis").forEach(axis => {
        const isPrice = axis.dataset.axis === "price";
        axis.innerHTML = (isPrice ? priceTicks : macdTicks).map(t => `<span>${t}</span>`).join("")
            + (isPrice ? '<span class="tag">11926.24</span>' : "");
    });
    document.getElementById("months").innerHTML = months.map(label).join("");
    document.getElementById("years").insertAdjacentHTML("beforeend", years.map(label).join(""));
}

drawGrid("price", 48, 637, priceTicks.map((t, i) => 71 + i * 20), months);
drawGrid("macd", 661, 816, [679, 705, 731, 757, 783, 809], months);
drawGrid("nav", 835, 885, [], years);
drawCandles();
drawBars();
fillAxes();
```
